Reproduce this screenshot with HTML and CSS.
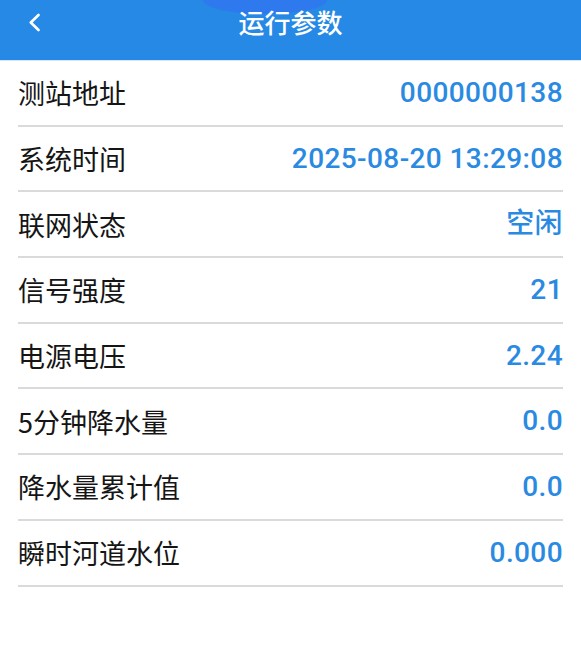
FILE: index.html
```html
<!DOCTYPE html>
<html lang="zh-CN">
<head>
    <meta charset="UTF-8">
    <meta name="viewport" content="width=device-width, initial-scale=1.0">
    <title>运行参数</title>
    <link rel="stylesheet" href="styles.css">
</head>
<body>
    <header class="top-bar">
        <span class="notch"></span>
        <div class="bar-row">
            <button class="back-btn" aria-label="返回">
                <svg width="12" height="19" viewBox="0 0 12 19">
                    <path d="M9.5 2 L1.8 9.5 L9.5 17" fill="none" stroke="#fff" stroke-width="2.6" stroke-linecap="round" stroke-linejoin="round"/>
                </svg>
            </button>
            <h1>运行参数</h1>
            <span></span>
        </div>
    </header>

    <ul class="param-list" id="param-list">
        <!-- linhas inseridas pelo script -->
    </ul>

    <script>
        // parâmetros de operação
        const params = [
            { name: "测站地址", value: "0000000138" },
            { name: "系统时间", value: "2025-08-20 13:29:08" },
            { name: "联网状态", value: "空闲" },
            { name: "信号强度", value: "21" },
            { name: "电源电压", value: "2.24" },
            { name: "5分钟降水量", value: "0.0" },
            { name: "降水量累计值", value: "0.0" },
            { name: "瞬时河道水位", value: "0.000" }
        ];

        const list = document.getElementById('param-list');

        params.forEach(p => {
            const li = document.createElement('li');
            li.className = 'param-row';
            li.innerHTML = `
                <span class="param-name">${p.name}</span>
                <span class="param-value">${p.value}</span>
            `;
            list.appendChild(li);
        });
    </script>
</body>
</html>
```

FILE: styles.css
```css
:root {
    --azul: #2589e5;
    --azul-valor: #2a8ae2;
    --linha: #dadada;
    --texto: #151515;
}

* {
    margin: 0;
    padding: 0;
    box-sizing: border-box;
}

body {
    background-color: #ffffff;
    color: var(--texto);
    font-family: "Noto Sans CJK SC", "Noto Sans", sans-serif;
}

.top-bar {
    position: relative;
    height: 61px;
    background-color: var(--azul);
    border-bottom: 1px solid #d4e8fb;
    overflow: hidden;
}

.notch {
    position: absolute;
    top: -14px;
    left: 203px;
    width: 124px;
    height: 28px;
    border-radius: 50%;
    background-color: #2f79ef;
}

.bar-row {
    position: relative;
    height: 44px;
    display: grid;
    grid-template-columns: 60px 1fr 60px;
    align-items: center;
}

.back-btn {
    background: none;
    border: none;
    padding-left: 29px;
    display: flex;
    align-items: center;
    height: 100%;
    cursor: pointer;
}

.top-bar h1 {
    text-align: center;
    color: #ffffff;
    font-size: 26px;
    font-weight: 500;
    line-height: 1;
}

.param-list {
    list-style: none;
}

.param-row {
    display: flex;
    justify-content: space-between;
    align-items: center;
    height: 65.7px;
    margin: 0 18px;
    border-bottom: 2px solid var(--linha);
}

.param-name {
    font-size: 27px;
    line-height: 1;
}

.param-value {
    font-family: Roboto, "Noto Sans CJK SC", sans-serif;
    font-size: 28px;
    font-weight: 500;
    letter-spacing: 0.4px;
    line-height: 1;
    color: var(--azul-valor);
}
```
